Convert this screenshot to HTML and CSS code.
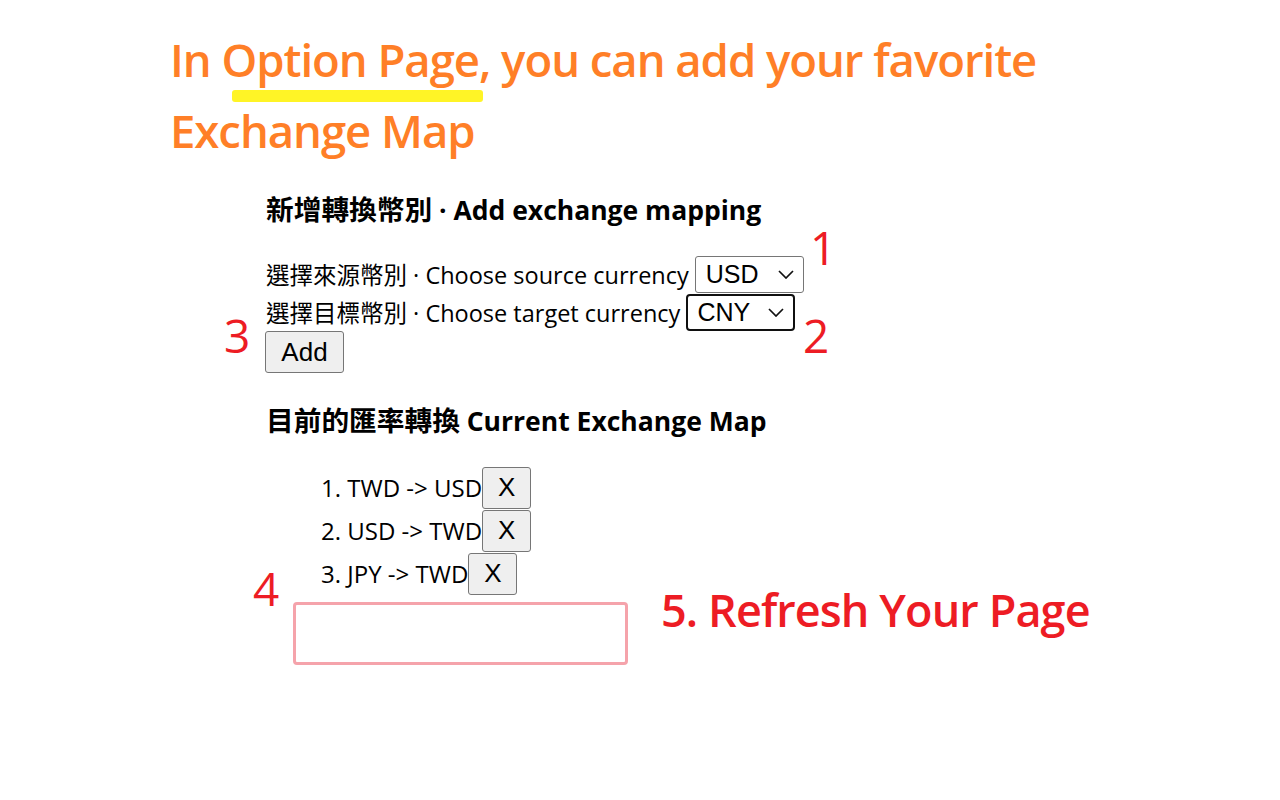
FILE: index.html
```html
<!DOCTYPE html>
<html lang="zh-Hant">
<head>
<meta charset="utf-8">
<title>Option Page</title>
<link rel="stylesheet" href="styles.css">
</head>
<body>
<div class="page">
  <h1 class="title">In Option Page, you can add your favorite<br>Exchange Map</h1>
  <span class="highlight"></span>

  <section class="options">
    <h3 class="heading"><span class="zh">新增轉換幣別</span> · Add exchange mapping</h3>
    <div class="row">
      <span class="label">選擇來源幣別 · Choose source currency</span>
      <span class="select">USD<svg class="chev" viewBox="0 0 16 9" width="16" height="9"><path d="M1 1l7 7 7-7" fill="none" stroke="#111" stroke-width="1.7"/></svg></span>
    </div>
    <div class="row">
      <span class="label">選擇目標幣別 · Choose target currency</span>
      <span class="select focused">CNY<svg class="chev" viewBox="0 0 16 9" width="16" height="9"><path d="M1 1l7 7 7-7" fill="none" stroke="#111" stroke-width="1.7"/></svg></span>
    </div>
    <button class="btn add">Add</button>

    <h3 class="heading second"><span class="zh">目前的匯率轉換</span> Current Exchange Map</h3>
    <ol class="map">
      <li><span class="label">TWD -&gt; USD</span><button class="btn x">X</button></li>
      <li><span class="label">USD -&gt; TWD</span><button class="btn x">X</button></li>
      <li><span class="label">JPY -&gt; TWD</span><button class="btn x">X</button></li>
    </ol>
  </section>

  <span class="num n1">1</span>
  <span class="num n2">2</span>
  <span class="num n3">3</span>
  <span class="num n4">4</span>
  <span class="box"></span>
  <span class="refresh">5. Refresh Your Page</span>
</div>
</body>
</html>
```

FILE: styles.css
```css
html, body {
  margin: 0;
  padding: 0;
  background: #ffffff;
}

body {
  font-family: "Open Sans", "Noto Sans CJK TC", sans-serif;
  color: #000;
}

.page {
  position: relative;
  width: 1280px;
  height: 800px;
  padding: 24px 0 0 170px;
  box-sizing: border-box;
}

.title {
  margin: 0;
  font-family: "Open Sans", sans-serif;
  font-weight: 600;
  font-size: 45.5px;
  line-height: 71px;
  color: #ff7f27;
  letter-spacing: -1.05px;
}

.highlight {
  position: absolute;
  left: 232px;
  top: 90px;
  width: 251px;
  height: 12px;
  background: #fff200;
  border-radius: 3px;
  opacity: 0.85;
}

.options {
  margin: 27px 0 0 96px;
  font-size: 23.5px;
}

.label {
  line-height: normal;
}

.heading {
  margin: 0 0 29px;
  font-size: 26.5px;
  font-weight: 700;
  line-height: 32px;
}

.heading .zh {
  font-size: 27.7px;
}

.heading.second {
  margin: 31px 0 29px;
}

.row {
  display: flex;
  align-items: center;
  height: 38px;
  gap: 6px;
}

.select {
  display: inline-flex;
  align-items: center;
  justify-content: space-between;
  box-sizing: border-box;
  width: 109px;
  height: 37px;
  padding: 0 9px 0 10px;
  border: 1px solid #767676;
  border-radius: 3px;
  font-family: "Liberation Sans", Arial, sans-serif;
  font-size: 25px;
  background: #fff;
}

.select.focused {
  border: 2px solid #101010;
  border-radius: 4px;
  padding-left: 9px;
}

.chev {
  display: block;
}

.btn {
  box-sizing: border-box;
  background: #efefef;
  border: 1px solid #767676;
  border-radius: 3px;
  font-family: "Liberation Sans", Arial, sans-serif;
  color: #000;
  padding: 0;
}

.add {
  display: block;
  width: 79px;
  height: 42px;
  font-size: 26px;
  margin-left: -1px;
}

.map {
  margin: 0;
  padding-left: 55px;
  list-style: none;
  counter-reset: item;
  font-size: 24px;
}

.map li {
  display: flex;
  align-items: center;
  height: 43px;
  counter-increment: item;
}

.map li::before {
  content: counter(item) ". ";
  white-space: pre;
  line-height: normal;
}

.x {
  width: 49px;
  height: 42px;
  font-size: 26px;
}

.num {
  position: absolute;
  font-family: "Open Sans", sans-serif;
  font-weight: 500;
  font-size: 46px;
  line-height: 1;
  color: #ed1c24;
}

.n1 { left: 810px; top: 224px; }
.n2 { left: 803px; top: 312px; }
.n3 { left: 224px; top: 312px; }
.n4 { left: 253px; top: 565px; }

.box {
  position: absolute;
  left: 293px;
  top: 602px;
  width: 335px;
  height: 63px;
  box-sizing: border-box;
  border: 3px solid #f5a3ab;
  border-radius: 4px;
}

.refresh {
  position: absolute;
  left: 661px;
  top: 580px;
  font-family: "Open Sans", sans-serif;
  font-weight: 600;
  font-size: 45px;
  line-height: 60px;
  color: #ed1c24;
  letter-spacing: -0.9px;
}
```
